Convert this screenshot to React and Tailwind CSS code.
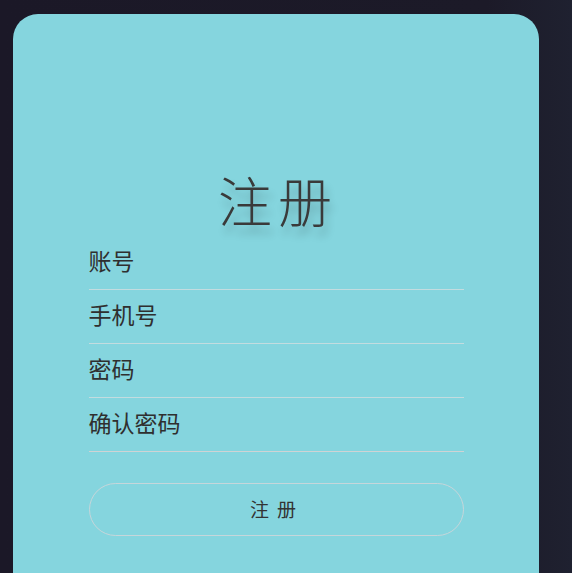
export default function App() {
  const font = { fontFamily: '"Noto Sans CJK SC", "Noto Sans", sans-serif' };
  const fields = ["账号", "手机号", "密码", "确认密码"];
  return (
    <div className="w-[572px] h-[573px] overflow-hidden bg-[linear-gradient(90deg,#1b1827_0%,#1c1a28_85%,#1f2130_100%)]" style={font}>
      <div className="ml-[13px] mt-[14px] w-[526px] h-[600px] rounded-t-[25px] bg-[#85d5de] flex flex-col items-center">
        <div className="mt-[157px] h-[64px] flex items-center justify-center text-[54px] font-light leading-none tracking-[6px] text-[#3a3a3a] [text-shadow:3px_8px_8px_rgba(0,0,0,0.22)] pl-[4px] pb-[6px]">
          注册
        </div>
        <div className="mt-[1px] w-[375px] flex flex-col">
          {fields.map((f, i) => (
            <div
              key={f}
              className={`h-[54px] flex items-center border-b ${i === 3 ? "border-[#cfd3d4]" : "border-[#c3dcdf]"} text-[23px] text-[#2f2f2f] leading-none`}
            >
              <span className="pb-[4px]">{f}</span>
            </div>
          ))}
        </div>
        <button className="mt-[31px] w-[375px] h-[53px] rounded-full border border-[#c6d6da] bg-transparent text-[19px] text-[#333] tracking-[8px] pl-[2px] flex items-center justify-center">
          注册
        </button>
      </div>
    </div>
  );
}
